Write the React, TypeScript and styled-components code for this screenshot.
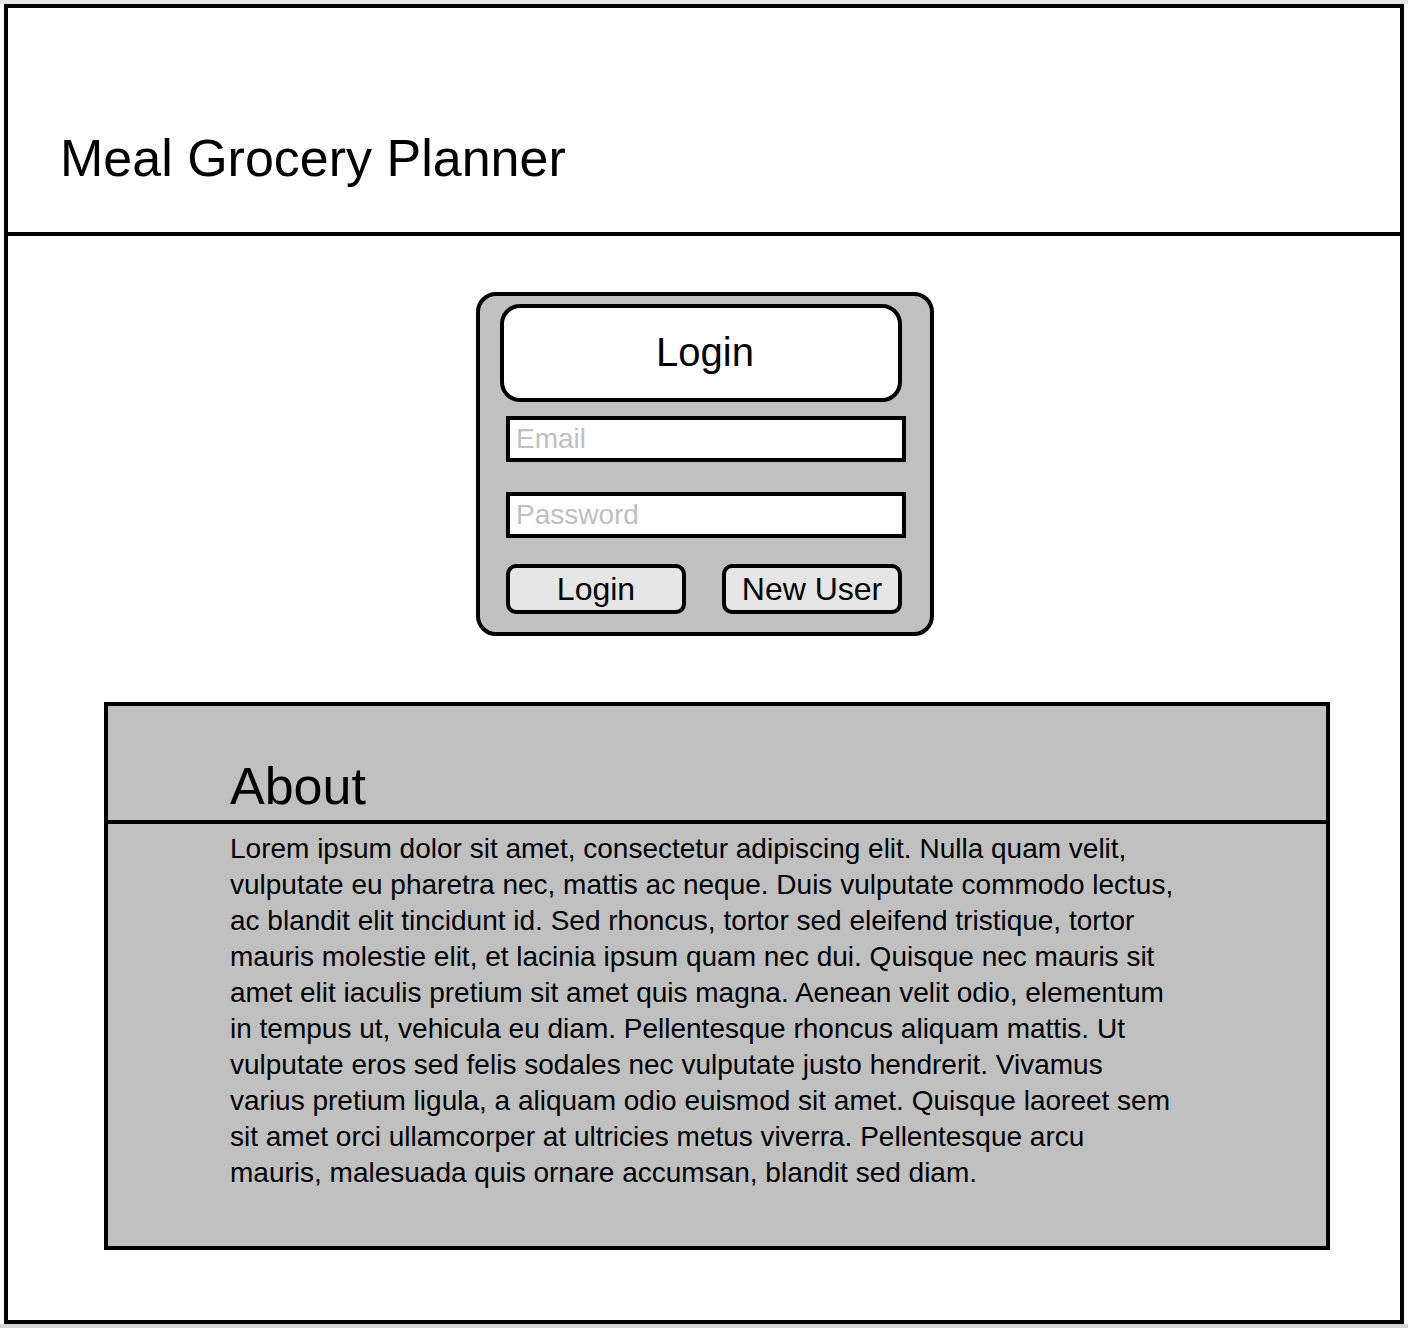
import React from 'react';
import styled, { createGlobalStyle } from 'styled-components';

const GlobalStyle = createGlobalStyle`
  *, *::before, *::after {
    box-sizing: border-box;
  }
  body {
    margin: 0;
    background: #ffffff;
    color: #000000;
    font-family: "Liberation Sans", Arial, Helvetica, sans-serif;
  }
`;

const Page = styled.div`
  padding: 0 4px;
  border-top: 4px solid #e6e6e6;
  border-bottom: 4px solid #d6d6d6;
`;

const Frame = styled.div`
  border: 4px solid #000000;
  background: #ffffff;
`;

const Header = styled.header`
  padding: 120px 52px 44px;
  border-bottom: 4px solid #000000;
`;

const Heading = styled.h1`
  margin: 0;
  font-size: 52px;
  line-height: 60px;
  font-weight: 400;
`;

const Main = styled.main`
  display: flex;
  flex-direction: column;
  gap: 66px;
  padding: 56px 70px 70px 72px;
`;

const LoginCard = styled.form`
  display: flex;
  flex-direction: column;
  align-self: center;
  gap: 14px;
  width: 458px;
  max-width: 100%;
  padding: 8px 24px 18px 20px;
  border: 4px solid #000000;
  border-radius: 20px;
  background: #c0c0c0;
`;

const CardTitle = styled.h2`
  margin: 0 4px 0 0;
  padding: 20px 0 22px 8px;
  border: 4px solid #000000;
  border-radius: 20px;
  background: #ffffff;
  font-size: 40px;
  line-height: 48px;
  font-weight: 400;
  text-align: center;
`;

const Fields = styled.div`
  display: flex;
  flex-direction: column;
  gap: 30px;
  padding-left: 6px;
`;

const TextField = styled.input`
  width: 100%;
  height: 46px;
  padding: 0 6px;
  border: 4px solid #000000;
  border-radius: 0;
  background: #ffffff;
  color: #000000;
  font-family: inherit;
  font-size: 28px;

  &::placeholder {
    color: #c0c0c0;
    opacity: 1;
  }
`;

const Actions = styled.div`
  display: grid;
  grid-template-columns: 1fr 1fr;
  gap: 36px;
  padding: 12px 4px 0 6px;
`;

const Button = styled.button`
  height: 50px;
  padding: 0;
  border: 4px solid #000000;
  border-radius: 10px;
  background: #e6e6e6;
  color: #000000;
  font-family: inherit;
  font-size: 32px;
  line-height: 36px;
  white-space: nowrap;
  cursor: pointer;
`;

const About = styled.section`
  margin-left: 24px;
  border: 4px solid #000000;
  background: #c0c0c0;
`;

const AboutHeader = styled.div`
  padding: 50px 122px 4px;
  border-bottom: 4px solid #000000;
`;

const AboutText = styled.p`
  margin: 0;
  padding: 7px 148px 55px 122px;
  font-size: 28px;
  line-height: 36px;
`;

export default function App() {
  return (
    <>
      <GlobalStyle />
      <Page>
        <Frame>
          <Header>
            <Heading>Meal Grocery Planner</Heading>
          </Header>
          <Main>
            <LoginCard onSubmit={(event: React.FormEvent) => event.preventDefault()}>
              <CardTitle>Login</CardTitle>
              <Fields>
                <TextField type="email" name="email" placeholder="Email" aria-label="Email" />
                <TextField type="password" name="password" placeholder="Password" aria-label="Password" />
              </Fields>
              <Actions>
                <Button type="submit">Login</Button>
                <Button type="button">New User</Button>
              </Actions>
            </LoginCard>
            <About>
              <AboutHeader>
                <Heading as="h2">About</Heading>
              </AboutHeader>
              <AboutText>
                Lorem ipsum dolor sit amet, consectetur adipiscing elit. Nulla quam velit, vulputate eu
                pharetra nec, mattis ac neque. Duis vulputate commodo lectus, ac blandit elit tincidunt
                id. Sed rhoncus, tortor sed eleifend tristique, tortor mauris molestie elit, et lacinia
                ipsum quam nec dui. Quisque nec mauris sit amet elit iaculis pretium sit amet quis
                magna. Aenean velit odio, elementum in tempus ut, vehicula eu diam. Pellentesque rhoncus
                aliquam mattis. Ut vulputate eros sed felis sodales nec vulputate justo hendrerit.
                Vivamus varius pretium ligula, a aliquam odio euismod sit amet. Quisque laoreet sem sit
                amet orci ullamcorper at ultricies metus viverra. Pellentesque arcu mauris, malesuada
                quis ornare accumsan, blandit sed diam.
              </AboutText>
            </About>
          </Main>
        </Frame>
      </Page>
    </>
  );
}
